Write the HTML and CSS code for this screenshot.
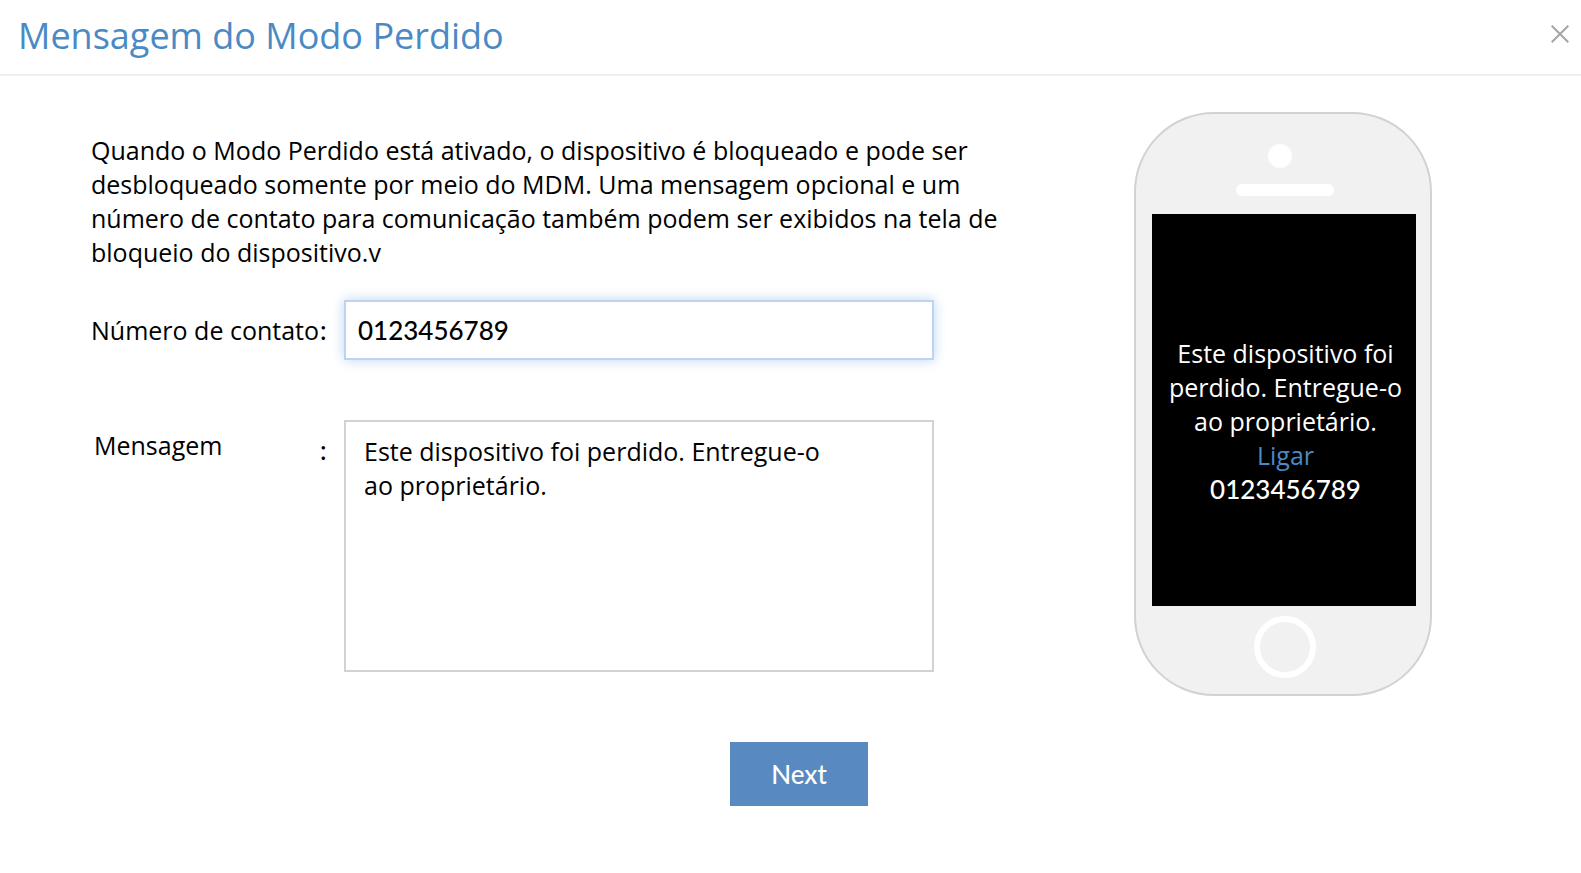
FILE: index.html
```
<!DOCTYPE html>
<html lang="pt-BR">
<head>
  <meta charset="UTF-8" />
  <meta name="viewport" content="width=device-width, initial-scale=1.0" />
  <title>Mensagem do Modo Perdido</title>
  <link rel="stylesheet" href="styles.css">
</head>
<body>
  <header class="dialog-header">
    <h1 class="dialog-title">Mensagem do Modo Perdido</h1>
    <button type="button" class="close-btn" aria-label="Fechar">
      <svg width="18" height="18" viewBox="0 0 18 18">
        <path d="M0.7 0.7 L17.3 17.3 M17.3 0.7 L0.7 17.3" fill="none" stroke="#a6a6a6" stroke-width="2" />
      </svg>
    </button>
  </header>

  <main class="dialog-body">
    <form class="lost-form">
      <p class="intro">Quando o Modo Perdido está ativado, o dispositivo é bloqueado e pode ser desbloqueado somente por meio do MDM. Uma mensagem opcional e um número de contato para comunicação também podem ser exibidos na tela de bloqueio do dispositivo.v</p>

      <div class="field">
        <label class="field-label" for="phone">Número de contato</label>
        <span class="colon">:</span>
        <input class="field-input" type="text" id="phone" value="0123456789">
      </div>

      <div class="field field-message">
        <label class="field-label" for="message">Mensagem</label>
        <span class="colon">:</span>
        <textarea class="field-area" id="message">Este dispositivo foi perdido. Entregue-o ao proprietário.</textarea>
      </div>
    </form>

    <div class="device">
      <svg class="device-top" width="98" height="52" viewBox="0 0 98 52">
        <circle cx="44" cy="12" r="12" fill="#fff" />
        <rect x="0" y="40" width="98" height="12" rx="6" fill="#fff" />
      </svg>
      <div class="device-screen">
        <p>Este dispositivo foi perdido. Entregue-o ao proprietário.</p>
        <a class="call" href="tel:0123456789">Ligar</a>
        <p class="number">0123456789</p>
      </div>
      <div class="device-home"></div>
    </div>
  </main>

  <footer class="dialog-footer">
    <button type="button" class="next-btn">Next</button>
  </footer>
</body>
</html>
```
FILE: styles.css
```
* { margin: 0; padding: 0; box-sizing: border-box; }
body {
  background: #fff;
  color: #000;
  font-family: "Open Sans", "Noto Sans", sans-serif;
  font-size: 25px;
  line-height: 34px;
}
input, textarea, button { font: inherit; color: inherit; }

.dialog-header {
  display: flex;
  justify-content: space-between;
  align-items: center;
  height: 76px;
  padding: 0 12px 6px 18px;
  border-bottom: 2px solid #eee;
}
.dialog-title {
  padding-top: 4px;
  color: #4a8ac4;
  font-size: 36px;
  font-weight: normal;
}
.close-btn {
  display: flex;
  background: none;
  border: none;
  cursor: pointer;
}

.dialog-body {
  display: flex;
  justify-content: space-between;
  align-items: flex-start;
  padding: 36px 149px 0 91px;
}
.lost-form {
  flex: 0 1 912px;
  padding-top: 21px;
}
.intro { margin-bottom: 31px; }
.field {
  display: flex;
  align-items: center;
  margin-bottom: 60px;
}
.field-label { width: 229px; white-space: nowrap; }
.colon { width: 24px; }
.field-input, .field-area {
  width: 590px;
  background: #fff;
  border: 2px solid #d2d2d2;
  outline: none;
}
.field-input {
  height: 60px;
  padding: 0 12px;
  border-color: #bfd2f0;
  box-shadow: 0 0 12px #b9d5f0;
}
.field-input, .colon, .number, .next-btn {
  font-family: Lato, sans-serif;
  font-size: 26px;
  font-weight: 500;
}
.field-message { align-items: flex-start; margin-bottom: 0; }
.field-message .field-label { padding: 8px 0 0 3px; }
.field-message .colon { padding-top: 13px; }
.field-area {
  height: 252px;
  padding: 12px 80px 12px 18px;
  resize: none;
}

.device {
  display: flex;
  flex-direction: column;
  align-items: center;
  flex: none;
  width: 298px;
  padding: 30px 0 16px;
  background: #f1f1f1;
  border: 2px solid #d2d2d2;
  border-radius: 80px;
}
.device-top { margin: 0 0 18px 4px; }
.device-screen {
  width: 264px;
  height: 392px;
  margin-left: 2px;
  padding: 122px 6px 0 9px;
  background: #000;
  color: #fff;
  text-align: center;
}
.call { color: #4a8ac4; text-decoration: none; }
.device-home {
  width: 62px;
  height: 62px;
  margin: 10px 0 0 4px;
  border: 6px solid #fff;
  border-radius: 50%;
}

.dialog-footer {
  display: flex;
  justify-content: center;
  padding: 46px 0 60px 17px;
}
.next-btn {
  width: 138px;
  height: 64px;
  background: #588ac1;
  border: none;
  color: #fff;
  cursor: pointer;
}
```
